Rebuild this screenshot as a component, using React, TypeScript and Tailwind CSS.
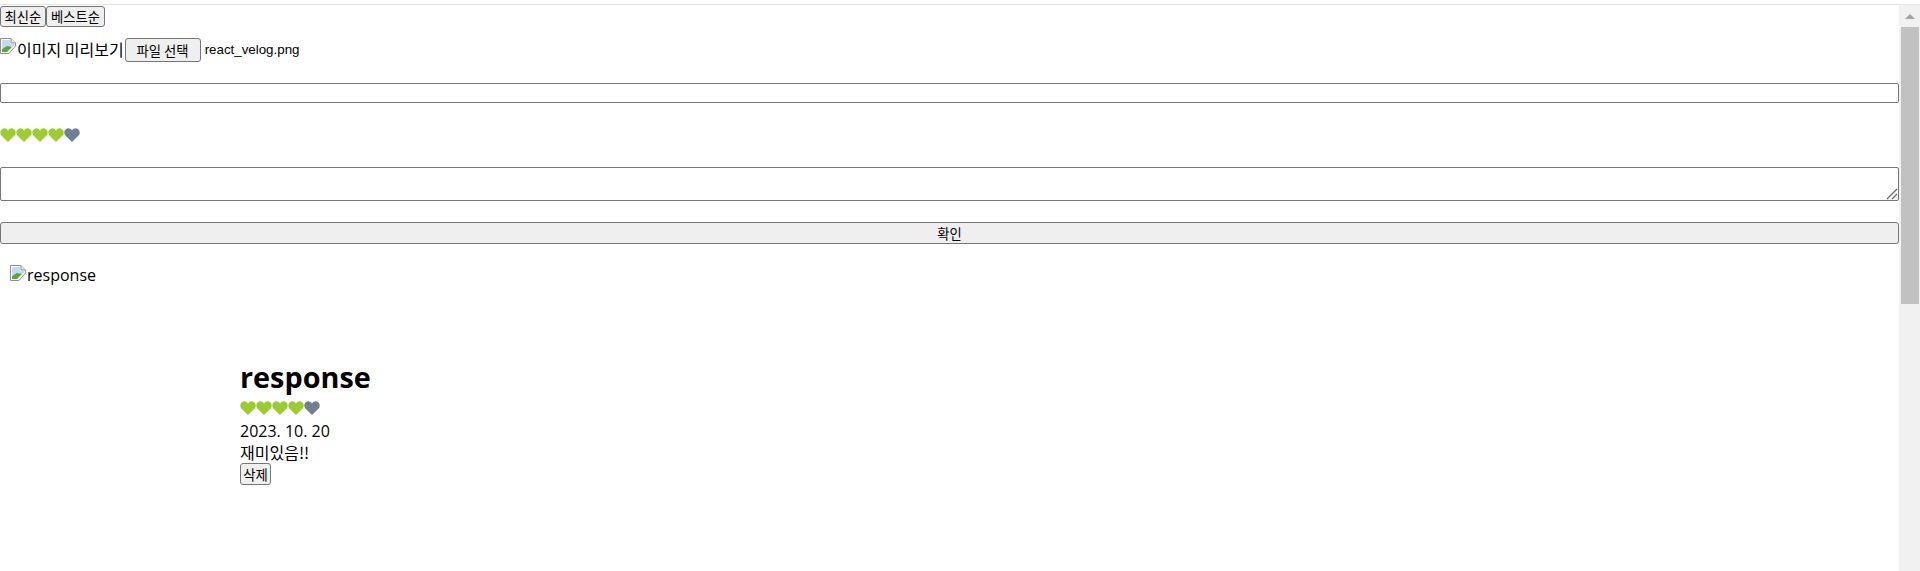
const Broken = () => (
  <svg width="16" height="16" viewBox="0 0 16 16" className="inline-block shrink-0 align-[-2px]">
    <path d="M0.5 0.5H11L15.5 5V8L9 15.5H0.5Z" fill="#fff" stroke="#8f8f8f" />
    <path d="M11 0.5V5H15.5" fill="#e8e8e8" stroke="#8f8f8f" />
    <path d="M2 2H10V6H14V8L8 11L2 10Z" fill="#c3d9f5" />
    <path d="M2 14V11L7 8L12 9L7 14Z" fill="#5aa63c" />
  </svg>
);

const Heart = ({ color }: { color: string }) => (
  <svg width="16" height="14" viewBox="0 0 16 14" className="block">
    <path
      d="M8 14L1.4 7.6C-0.4 5.8 0.1 2 2.2 0.9C4.2 -0.2 6.6 0.4 8 2.6C9.4 0.4 11.8 -0.2 13.8 0.9C15.9 2 16.4 5.8 14.6 7.6Z"
      fill={color}
    />
  </svg>
);

const Hearts = () => (
  <div className="flex h-[14px]">
    <Heart color="#9acd32" />
    <Heart color="#9acd32" />
    <Heart color="#9acd32" />
    <Heart color="#9acd32" />
    <Heart color="#708090" />
  </div>
);

const btn =
  "box-border border border-[#767676] rounded-[3px] bg-[#efefef] text-black text-[13.33px] leading-[15px] [font-family:'Noto_Sans_CJK_KR',sans-serif]";

export default function App() {
  return (
    <div className="flex h-[571px] flex-col overflow-hidden bg-white text-black [font-family:'Noto_Sans_CJK_KR',sans-serif]">
      <div className="mt-1 h-px shrink-0 bg-[#e4e4e4]" />
      <div className="flex min-h-0 flex-1">
        <main className="min-w-0 flex-1">
          <div className="flex pt-px">
            <button className={`${btn} h-[21px] w-[46px] p-0`}>최신순</button>
            <button className={`${btn} h-[21px] w-[59px] p-0`}>베스트순</button>
          </div>

          <div className="mt-[11px] flex h-6 items-start">
            <Broken />
            <span className="ml-px h-[24px] text-[16px] leading-[22px]">이미지 미리보기</span>
            <button className={`${btn} ml-px h-6 w-[76px] p-0`}>파일 선택</button>
            <span className="ml-1 pt-[3px] text-[13.33px] leading-[18px] [font-family:'Liberation_Sans',sans-serif]">
              react_velog.png
            </span>
          </div>

          <input className="mt-[21px] box-border block h-[20px] w-full rounded-[2px] border border-[#767676] bg-white" />

          <div className="mt-[25px]">
            <Hearts />
          </div>

          <div className="relative mt-[25px] h-[34px] w-full rounded-[2px] border border-[#767676] bg-white">
            <svg width="12" height="12" viewBox="0 0 12 12" className="absolute bottom-0 right-0">
              <path d="M1 11L11 1M6 11L11 6" stroke="#666" strokeWidth="1.3" />
            </svg>
          </div>

          <button className={`${btn} mt-[21px] block h-[22px] w-full p-0`}>확인</button>

          <div className="mt-[21px] pl-[10px]">
            <div className="flex h-[18px] items-start">
              <Broken />
              <span className="ml-px text-[16px] leading-[20px] [font-family:'Open_Sans',sans-serif]">response</span>
            </div>
          </div>

          <div className="mt-[74px] pl-[240px]">
            <h2 className="text-[28.8px] font-bold leading-[39px] [font-family:'Open_Sans',sans-serif]">response</h2>
            <div className="mt-[5px]">
              <Hearts />
            </div>
            <div className="mt-[5px] text-[16px] leading-[22px] [font-family:'Open_Sans',sans-serif]">2023. 10. 20</div>
            <div className="text-[16px] leading-[20px]">재미있음!!</div>
            <button className={`${btn} mt-[1px] block h-[22px] w-[31px] p-0`}>삭제</button>
          </div>
        </main>

        <aside className="flex w-[21px] shrink-0 flex-col items-center bg-[#f1f1f1]">
          <div className="flex h-[22px] items-center justify-center">
            <div className="h-0 w-0 border-x-[5px] border-b-[5px] border-x-transparent border-b-[#a3a3a3]" />
          </div>
          <div className="h-[277px] w-[18px] bg-[#c1c1c1]" />
        </aside>
      </div>
    </div>
  );
}
